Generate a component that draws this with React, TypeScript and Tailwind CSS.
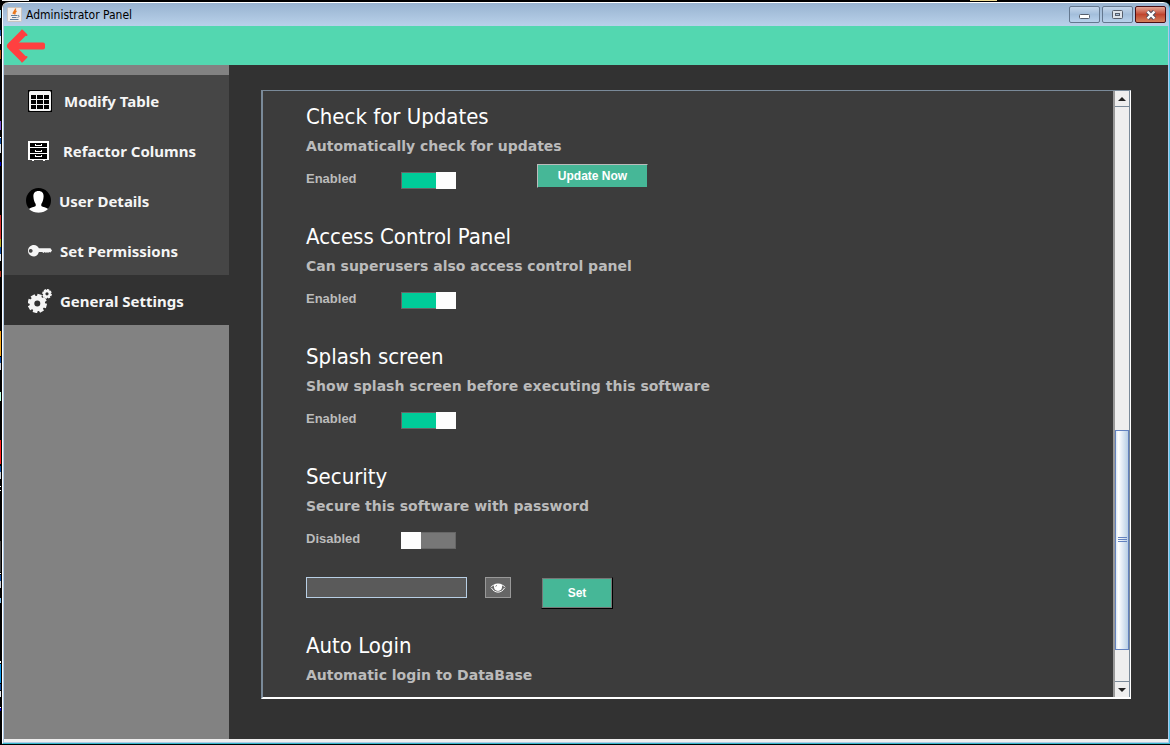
import { useState } from "react";
import type { ReactNode } from "react";

function TableIcon() {
  return (
    <svg width="24" height="22" viewBox="0 0 24 22" aria-hidden="true">
      <rect width="24" height="22" fill="#000" />
      <rect x="1" y="1" width="22" height="20" rx="1.500" fill="#f4f4f4" />
      <g fill="#000">
        {[5, 10, 15].map((y) =>
          [3, 9, 16].map((x) => <rect key={`${x}-${y}`} x={x} y={y} width={x === 9 ? 6 : 5} height="4" />),
        )}
      </g>
    </svg>
  );
}

function DrawersIcon() {
  return (
    <svg width="21" height="20" viewBox="0 0 21 20" aria-hidden="true">
      <rect width="21" height="19" fill="#fff" />
      <path d="M4 19h2v1H4zM15 19h2v1h-2z" fill="#fff" />
      <path d="M2 2h17v4H2zM2 7h17v5H2zM2 13h17v5H2z" fill="#000" />
      <path d="M7 3h1v1h5V3h1v2H7zM7 9h1v1h5V9h1v2H7zM7 14h1v1h5v-1h1v2H7z" fill="#fff" />
    </svg>
  );
}

function UserIcon() {
  return (
    <svg width="25" height="25" viewBox="0 0 25 25" aria-hidden="true">
      <circle cx="12.500" cy="12.500" r="12.500" fill="#000" />
      <path d="M12.500 3c3.500 0 5.300 2.200 5.100 5.500-.2 3.500-1.200 6-2.300 7.500v2c1.500 1.200 5 1.400 6.800 3C19.800 23.200 16.500 24.800 12.500 24.800S5.200 23.200 2.900 21c1.800-1.600 5.300-1.800 6.800-3v-2C8.600 14.500 7.600 12 7.400 8.500 7.200 5.200 9 3 12.500 3z" fill="#fff" />
    </svg>
  );
}

function KeyIcon() {
  return (
    <svg width="24" height="12" viewBox="0 0 24 12" aria-hidden="true">
      <path fillRule="evenodd" d="M6 0c2.300 0 4 1.300 4.900 3.300H22.500L24 5.500 22.500 7.500 21 7l-1 1-1-1-1 1-1.200-1L15.500 8l-1.300-1H10.900C10 10 8.300 11.500 6 11.500 2.500 11.500 0 9 0 5.800S2.500 0 6 0zM3.200 4a1.900 1.900 0 1 0 0 3.700 1.900 1.900 0 0 0 0-3.700z" fill="#f5f5f5" />
    </svg>
  );
}

function Gear({ cx, cy, r, hole }: { cx: number; cy: number; r: number; hole: number }) {
  return (
    <g transform={`translate(${cx} ${cy})`}>
      <circle r={(r * 0.82 + hole) / 2} fill="none" stroke="#f5f5f5" strokeWidth={r * 0.82 - hole} />
      {[0, 45, 90, 135, 180, 225, 270, 315].map((a) => (
        <rect key={a} x={-r * 0.24} y={-r} width={r * 0.48} height={r * 0.35} fill="#f5f5f5" transform={`rotate(${a + 15})`} />
      ))}
    </g>
  );
}

function GearsIcon() {
  return (
    <svg width="24" height="24" viewBox="0 0 24 24" aria-hidden="true">
      <Gear cx={9.3} cy={14.5} r={9.5} hole={3} />
      <Gear cx={19} cy={4.8} r={4.8} hole={1.6} />
    </svg>
  );
}

function JavaIcon() {
  return (
    <svg width="15" height="15" viewBox="0 0 15 15" aria-hidden="true">
      <rect x="0.500" y="0.500" width="14" height="14" rx="1" fill="#f1efec" stroke="#c9c5c0" />
      <path d="M8.500 1.500C9 3.500 5.500 4.500 6.500 7M9.500 4C7.500 5 7.500 6 8 7.500" stroke="#e8771c" strokeWidth="1.400" fill="none" />
      <path d="M4 8.500h6M5 10.500h4.500M3 12.500h8.500M10.500 8.500c2.500-.5 2 1.500 0 2" stroke="#5f7d9a" strokeWidth="1" fill="none" />
    </svg>
  );
}

function EyeIcon() {
  return (
    <svg width="16" height="10" viewBox="0 0 16 10" aria-hidden="true">
      <path d="M0 5C3.500-1 12.500-1 16 5 14.500 3.800 13 2.600 12 2.400 12.500 5.500 11 8 8 8S3.500 5.500 4 2.400C3 2.600 1.500 3.800 0 5z" fill="#fff" />
      <path d="M1.500 5C4.500 10.500 11.500 10.500 14.500 5" fill="none" stroke="#fff" strokeWidth="1" />
      <path d="M7 2.200a1.800 1.800 0 0 0-1.300 1.600" stroke="#666" strokeWidth="0.700" fill="none" />
    </svg>
  );
}

const strip: [number, number, string][] = [
  [10, 8, "#9edcf3"], [30, 6, "#1b4f9c"], [36, 8, "#dfe6ee"], [50, 9, "#a34a0c"],
  [121, 9, "#7a4fd0"], [137, 1, "#fff"], [138, 6, "#0b4ba0"], [144, 9, "#d5dce6"], [162, 4, "#0000c8"],
  [215, 24, "#d93030"], [239, 8, "#b8a820"], [247, 7, "#0b4ba0"], [254, 7, "#dfe6ee"], [271, 6, "#b03020"],
  [331, 25, "#f7a81b"], [357, 6, "#0b4ba0"], [363, 7, "#c6cdd8"], [392, 9, "#b8ffe0"],
  [440, 24, "#ff1d1d"], [466, 6, "#0b4ba0"], [472, 7, "#c6cdd8"], [486, 1, "#fff"], [490, 1, "#fff"],
  [541, 31, "#444"], [573, 1, "#fff"], [575, 6, "#0b4ba0"], [581, 7, "#c6cdd8"], [598, 5, "#79b7e3"],
  [661, 2, "#fff"], [664, 19, "#0893e6"], [684, 6, "#0b4ba0"], [691, 6, "#dfe6ee"], [707, 1, "#fff"], [708, 3, "#0000c8"],
];

function Toggle({ label, on }: { label: string; on: boolean }) {
  const [checked, setChecked] = useState(on);
  return (
    <label className="flex h-5 items-center">
      <span className="w-[95px] pb-0.5 font-['Liberation_Sans',sans-serif] text-[13px] leading-4 font-bold text-[#bbbbbb]">
        {label}
      </span>
      <input
        type="checkbox"
        role="switch"
        checked={checked}
        onChange={() => setChecked(!checked)}
        className="flex h-[17px] w-[55px] appearance-none border border-[#666666] bg-[#777777] before:-my-px before:-ml-px before:w-5 before:bg-[#fdfdfd] checked:justify-end checked:bg-[#00cc99] checked:before:-mr-px checked:before:ml-0"
      />
    </label>
  );
}

function Heading({ title, text }: { title: string; text: string }) {
  return (
    <>
      <h2 className="font-['DejaVu_Sans_Condensed','Noto_Sans',sans-serif] text-[22px] leading-7 text-white">{title}</h2>
      <p className="mt-[5px] font-['DejaVu_Sans',sans-serif] text-sm leading-5 font-bold text-[#bbbbbb]">{text}</p>
    </>
  );
}

function Setting({ title, text, label, on, children }: { title: string; text: string; label: string; on?: boolean; children?: ReactNode }) {
  return (
    <section className="h-[120px]">
      <Heading title={title} text={text} />
      <div className="mt-3.5 flex items-center gap-20">
        <Toggle label={label} on={!!on} />
        {children}
      </div>
    </section>
  );
}

const navItems = [
  { label: "Modify Table", icon: <TableIcon />, style: "gap-3 pl-6" },
  { label: "Refactor Columns", icon: <DrawersIcon />, style: "gap-3.5 pl-6" },
  { label: "User Details", icon: <UserIcon />, style: "gap-2 pl-[22px]" },
  { label: "Set Permissions", icon: <KeyIcon />, style: "gap-2 pl-6" },
  { label: "General Settings", icon: <GearsIcon />, style: "gap-2 pl-6", active: true },
];

function WindowButton({ name, close, children }: { name: string; close?: boolean; children: ReactNode }) {
  return (
    <button
      aria-label={name}
      className={`flex h-[17px] w-[31px] items-center justify-center rounded-xs border ${
        close
          ? "border-[#4a0f14] bg-linear-to-b from-[#e3a596] via-[#c0452f] to-[#d4805c]"
          : "border-[#64788f] bg-linear-to-b from-[#c3d6ea] via-[#a3bedb] to-[#b9d2ec]"
      }`}
    >
      {children}
    </button>
  );
}

export default function App() {
  return (
    <div className="flex min-h-screen bg-black">
      <svg className="w-0.5 shrink-0" height="745" aria-hidden="true">
        {strip.map(([y, h, fill]) => (
          <rect key={y} y={y} width="1" height={h} fill={fill} />
        ))}
      </svg>
      <div className="flex grow flex-col pb-px">
        <svg className="h-0.5 w-full shrink-0" aria-hidden="true">
          <rect width="27" height="1" fill="#f0f0f0" />
          <rect x="968" width="27" height="1" fill="#f0dc96" />
        </svg>
        <div className="flex grow flex-col rounded-t-md border-r border-b border-l border-r-[#4fc0e8] border-b-[#37b8cc] border-l-white">
          <header className="flex h-6 items-center gap-1 rounded-t-md border-t border-white bg-linear-to-b from-[#98b3d0] to-[#b9d1ea] pr-[3px] pl-1">
            <JavaIcon />
            <h1 className="grow font-['DejaVu_Sans_Condensed','Noto_Sans',sans-serif] text-xs leading-4 text-black">Administrator Panel</h1>
            <div className="flex gap-0.5">
              <WindowButton name="Minimize">
                <svg className="mt-1" width="11" height="5"><rect x="0.500" y="0.500" width="10" height="4" rx="1" fill="#fff" stroke="#555e6c" /></svg>
              </WindowButton>
              <WindowButton name="Maximize">
                <svg width="11" height="9"><rect x="0.500" y="0.500" width="10" height="8" rx="1" fill="#dde3ea" stroke="#555e6c" /><rect x="3.500" y="3.500" width="4" height="2" fill="#a9c2de" stroke="#555e6c" /></svg>
              </WindowButton>
              <WindowButton name="Close" close>
                <svg width="12" height="10" viewBox="0 0 12 10"><path d="M2.500 1.500l7 7M9.500 1.500l-7 7" stroke="#54525f" strokeWidth="4.400" /><path d="M2.500 1.500l7 7M9.500 1.500l-7 7" stroke="#fff" strokeWidth="2.400" /></svg>
              </WindowButton>
            </div>
          </header>
          <div className="flex grow flex-col border-r border-b border-l border-[#b0cae6]">
            <div className="flex h-[39px] items-center bg-[#53d7b0] pl-0.5">
              <button aria-label="Back">
                <svg className="block" width="40" height="34" viewBox="0 0 40 34" aria-hidden="true">
                  <path d="M18 3.500L4.500 17 18 30.500" fill="none" stroke="#ff4040" strokeWidth="7" strokeLinejoin="round" />
                  <path d="M16 1.500L20.500 6M16 32.500L20.500 28" stroke="#ff4040" strokeWidth="2" strokeLinecap="round" />
                  <rect x="5" y="13.500" width="34" height="7" rx="2" fill="#ff4040" />
                </svg>
              </button>
            </div>
            <div className="flex grow border-b-[3px] border-[#eeeeee] bg-[#323232]">
              <nav className="w-[225px] shrink-0 bg-[#828282] pt-2.5">
                {navItems.map((item) => (
                  <a
                    key={item.label}
                    href="#"
                    className={`flex h-[50px] items-center pt-px font-['Noto_Sans',sans-serif] text-[15px] leading-5 font-bold text-[#f5f5f5] ${item.active ? "bg-[#323232]" : "bg-[#464646]"} ${item.style}`}
                  >
                    {item.icon}
                    {item.label}
                  </a>
                ))}
              </nav>
              <main className="flex grow pt-[25px] pr-[37px] pb-10 pl-8">
                <div className="flex grow border-t border-r border-b-2 border-l-2 border-t-[#7a8a99] border-r-white border-b-white border-l-[#7a8a99] bg-[#3c3c3c]">
                  <div className="grow pt-3 pl-[43px]">
                    <Setting title="Check for Updates" text="Automatically check for updates" label="Enabled" on>
                      <button className="-mt-2 ml-px h-6 w-[111px] border border-t-[#bbbbbb] border-r-[#3c3c3c] border-b-[#3c3c3c] border-l-[#bbbbbb] bg-[#46b797] font-['Liberation_Sans',sans-serif] text-xs font-bold text-white">Update Now</button>
                    </Setting>
                    <Setting title="Access Control Panel" text="Can superusers also access control panel" label="Enabled" on />
                    <Setting title="Splash screen" text="Show splash screen before executing this software" label="Enabled" on />
                    <Setting title="Security" text="Secure this software with password" label="Disabled" on={false} />
                    <form className="-mt-1.5 flex h-[55px] items-start" onSubmit={(e) => e.preventDefault()}>
                      <input type="password" aria-label="Password" className="h-[21px] w-[161px] border border-[#b8cfe5] bg-[#5a5a5a] px-1 text-xs text-white outline-none" />
                      <button type="button" aria-label="Show password" className="ml-[18px] flex h-[21px] w-[26px] items-center justify-center border border-[#999999] bg-[#666666]">
                        <EyeIcon />
                      </button>
                      <button className="ml-[30px] h-8 w-[72px] border border-t-[#3c3c3c] border-r-black border-b-black border-l-[#3c3c3c] bg-[#46b797] font-['Liberation_Sans',sans-serif] text-xs font-bold text-white inset-ring inset-ring-[#777777]">Set</button>
                    </form>
                    <section>
                      <Heading title="Auto Login" text="Automatic login to DataBase" />
                    </section>
                  </div>
                  <div className="flex w-[17px] shrink-0 flex-col border-r border-l-2 border-r-[#7a8a99] border-l-[#999999] bg-[#eeeeee]">
                    <button aria-label="Scroll up" className="flex h-4 items-center justify-center border-b border-[#7a8a99]">
                      <svg width="8" height="4"><path d="M4 0L8 4H0z" fill="#222" /></svg>
                    </button>
                    <div className="h-[323px]" />
                    <div className="flex h-[220px] items-center justify-center border border-[#6382bf] bg-linear-to-r from-[#dce9f4] via-white via-20% to-[#b8cfe5]">
                      <svg width="9" height="6"><path d="M0 .5h9M0 2.500h9M0 4.500h9" stroke="#6382bf" /></svg>
                    </div>
                    <div className="grow" />
                    <button aria-label="Scroll down" className="flex h-4 items-center justify-center border-t border-[#7a8a99]">
                      <svg width="8" height="4"><path d="M0 0h8L4 4z" fill="#222" /></svg>
                    </button>
                  </div>
                </div>
              </main>
            </div>
          </div>
        </div>
      </div>
    </div>
  );
}
